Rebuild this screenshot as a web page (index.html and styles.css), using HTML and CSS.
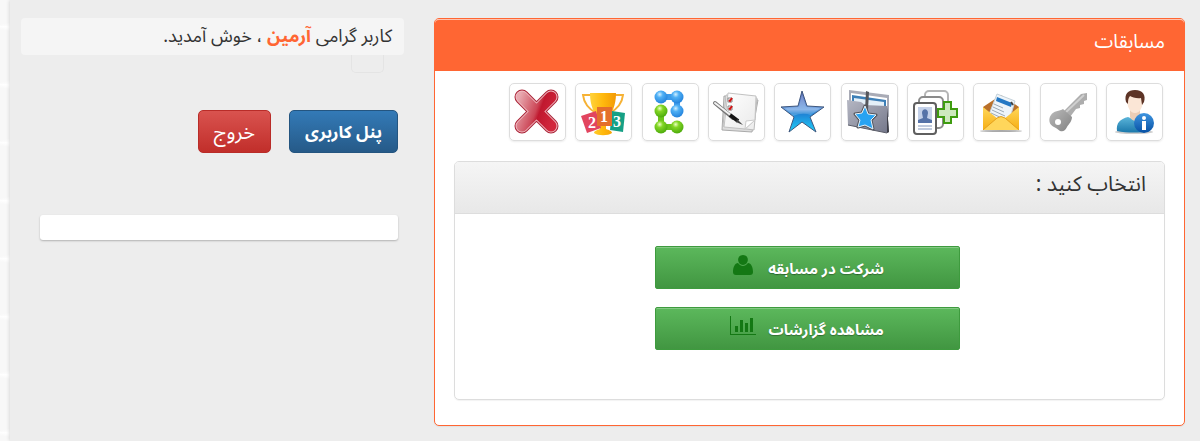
FILE: index.html
```html
<!DOCTYPE html>
<html lang="fa" dir="rtl">
<head>
    <meta charset="UTF-8">
    <meta name="viewport" content="width=device-width, initial-scale=1.0">
    <title>مسابقات</title>
    <link rel="stylesheet" href="styles.css">
</head>
<body>
    <div class="page">
        <main class="panel">
            <h1 class="panel-title">مسابقات</h1>
            <div class="panel-body">
                <nav class="icon-bar">
                    <!-- profile -->
                    <a href="#" class="icon-link" aria-label="مشخصات کاربر">
                        <svg viewBox="0 0 57 58">
                            <defs>
                                <linearGradient id="shirt" x1="0" y1="0" x2="0" y2="1"><stop offset="0" stop-color="#5bb5da"/><stop offset="1" stop-color="#1b78ab"/></linearGradient>
                                <linearGradient id="info" x1="0" y1="0" x2="0" y2="1"><stop offset="0" stop-color="#3f95e0"/><stop offset="1" stop-color="#0650a4"/></linearGradient>
                            </defs>
                            <ellipse cx="28" cy="49" rx="19" ry="2" fill="#ccc"/>
                            <path d="M11 48c-1-8 3-12 11-14l7 3 7-3c7 2 9 7 8 14-10 2-23 2-33 0z" fill="url(#shirt)"/>
                            <path d="M24 27h10v7c-2 5-8 5-10 0z" fill="#eccdb6"/>
                            <path d="M21 16c0-7 16-7 16 0 0 8-3 14-8 14s-8-6-8-14z" fill="#fbe6d6"/>
                            <path d="M20 19c-2-8 2-12 9-12 8 0 11 5 9 12l-2 3-1-7c-4 1-9-1-11-2-2 2-2 5-2 8z" fill="#5d3426"/>
                            <circle cx="38" cy="40" r="10" fill="url(#info)"/>
                            <circle cx="38" cy="35" r="2" fill="#fff"/>
                            <path d="M36 38h4v9h-4z" fill="#fff"/>
                        </svg>
                    </a>
                    <!-- password -->
                    <a href="#" class="icon-link" aria-label="تغییر رمز عبور">
                        <svg viewBox="0 0 57 58">
                            <defs>
                                <linearGradient id="key" x1="0" y1="0" x2="1" y2="1"><stop offset="0" stop-color="#bbb"/><stop offset="1" stop-color="#828282"/></linearGradient>
                            </defs>
                            <path d="M24 28 41 11l6-1v7l-3 1v3l-4 1v3l-4 1-6 8z" fill="#adadad"/>
                            <path d="M24 31 44 12" stroke="#cfcfcf" stroke-width="2"/>
                            <path d="M11 32c2-4 9-4 12-6l9 8c0 4-3 7-5 10-2 4-4 5-7 4-2-1-3-3-6-4-5-2-6-8-3-12z" fill="url(#key)"/>
                            <circle cx="18" cy="39" r="3" fill="#fff"/>
                        </svg>
                    </a>
                    <!-- messages -->
                    <a href="#" class="icon-link" aria-label="پیام ها">
                        <svg viewBox="0 0 57 58">
                            <defs>
                                <linearGradient id="mail" x1="0" y1="0" x2="0" y2="1"><stop offset="0" stop-color="#ffd75a"/><stop offset="1" stop-color="#f6ae12"/></linearGradient>
                            </defs>
                            <ellipse cx="28" cy="48" rx="21" ry="1" fill="#aaa"/>
                            <path d="M10 24 28 12l18 12v12H10z" fill="#b9702a"/>
                            <path d="m24 11 18 7-7 24-20-8z" fill="#eef4f9" stroke="#c4d1da" stroke-width="1"/>
                            <path d="m24 14 15 6-1 4-15-6z" fill="#2478c4"/>
                            <path d="m21 21 9 4m-10-1 11 5m-12-2 13 6m-14-3 13 6" stroke="#9caab4" stroke-width="1"/>
                            <path d="m38 19 2 3" stroke="#444" stroke-width="2"/>
                            <path d="m10 24 15 12h6l15-12v23H10z" fill="url(#mail)"/>
                            <path d="m10 47 14-12q4-3 8 0l14 12" fill="#ffd65b" stroke="#e5a01c" stroke-width="1"/>
                        </svg>
                    </a>
                    <!-- invite -->
                    <a href="#" class="icon-link" aria-label="افزودن کاربر">
                        <svg viewBox="0 0 57 58">
                            <rect x="18" y="8" width="23" height="30" rx="4" fill="#fff" stroke="#b5b5b5" stroke-width="2"/>
                            <rect x="12" y="14" width="24" height="31" rx="4" fill="#fff" stroke="#8b8b8b" stroke-width="2"/>
                            <path d="M37 19h7v7h6v8h-6v6h-7v-6h-6v-8h6z" fill="#cde9be" stroke="#3f9c10" stroke-width="2"/>
                            <rect x="7" y="20" width="22" height="31" rx="3" fill="#fff" stroke="#5f5f5f" stroke-width="2"/>
                            <rect x="11" y="24" width="14" height="16" fill="#c4d1e9"/>
                            <path d="M11 40v-3l5-2-1-5c0-5 6-5 6 0l-1 5 5 2v3z" fill="#5673a8"/>
                            <path d="M11 43h14M11 46h14" stroke="#8297bd" stroke-width="1"/>
                        </svg>
                    </a>
                    <!-- favourites folder -->
                    <a href="#" class="icon-link" aria-label="پوشه برگزیده ها">
                        <svg viewBox="0 0 57 58">
                            <defs>
                                <linearGradient id="folder" x1="0" y1="0" x2="1" y2="1"><stop offset="0" stop-color="#b5b7c3"/><stop offset="1" stop-color="#74778a"/></linearGradient>
                            </defs>
                            <path d="m8 7 40 5v22L8 28z" fill="#a9abb6"/>
                            <path d="m10 10 36 5v12l-36-5z" fill="#fff"/>
                            <path d="m11 12 34 5v8l-34-5z" fill="#3d7fb7"/>
                            <path d="m13 15 30 4v8l-30-5z" fill="#e4eff8"/>
                            <path d="m6 17 14 2 4 3 22 1 2 26-2 1-39-8z" fill="url(#folder)"/>
                            <path d="m46 23 2 26-2 1z" fill="#3e3f47"/>
                            <path d="m7 42 39 8" stroke="#5b5d69" stroke-width="1"/>
                            <path d="m25 8 3 1-1 18h-3z" fill="#55565c"/>
                            <path d="m24 23 3 8 8 1-5 5 2 9-8-4-7 2 2-7-5-6 7-1z" fill="#28a3f2" stroke="#55565c" stroke-width="3" stroke-linejoin="round"/>
                            <path d="m24 23 3 8 8 1-5 5 2 9-8-4-7 2 2-7-5-6 7-1z" fill="#28a3f2" stroke="#e9f4fc" stroke-width="1"/>
                        </svg>
                    </a>
                    <!-- star -->
                    <a href="#" class="icon-link" aria-label="امتیازها">
                        <svg viewBox="0 0 57 58">
                            <defs>
                                <linearGradient id="star" x1="0" y1="0" x2="0" y2="1"><stop offset="0" stop-color="#4e61b4"/><stop offset=".45" stop-color="#6fa5e4"/><stop offset=".55" stop-color="#1f82d4"/><stop offset="1" stop-color="#1fd0fa"/></linearGradient>
                            </defs>
                            <path d="m28 8 5 15 17 1-14 10 6 15-14-10-13 10 5-15L7 24l17-1z" fill="url(#star)" stroke="#40587e" stroke-width="1"/>
                            <path d="m28 11 4 13 14 1-9 7q-9-3-18 1l-8-8 14-1z" fill="#fff" opacity=".2"/>
                        </svg>
                    </a>
                    <!-- test sheet -->
                    <a href="#" class="icon-link" aria-label="آزمون">
                        <svg viewBox="0 0 57 58">
                            <defs>
                                <linearGradient id="sheet" x1="0" y1="0" x2="1" y2="1"><stop offset="0" stop-color="#fff"/><stop offset="1" stop-color="#eaeaea"/></linearGradient>
                            </defs>
                            <path d="m16 13 34 4-6 32-30-2z" fill="#ddd" stroke="#aaa" stroke-width="1"/>
                            <path d="m18 12 31 3-3 32-31-4z" fill="#eee" stroke="#bbb" stroke-width="1"/>
                            <path d="m20 10 28 3-1 24-10 9-21-2z" fill="url(#sheet)" stroke="#c2c2c2" stroke-width="1"/>
                            <path d="m47 37-10 9 1-8z" fill="#fff" stroke="#ccc" stroke-width="1"/>
                            <path d="M20 15h4v4h-4zM20 23h4v4h-4z" fill="#fff" stroke="#888" stroke-width="1"/>
                            <path d="m21 17 1 1 2-3M21 25l1 1 2-3" fill="none" stroke="#d31414" stroke-width="2"/>
                            <path d="m7 20 18 15" stroke="#777" stroke-width="4" stroke-linecap="round"/>
                            <path d="m7 20 18 14" stroke="#f2f2f2" stroke-width="2" stroke-linecap="round"/>
                            <path d="m22 32 8 6" stroke="#151515" stroke-width="4"/>
                            <path d="m29 36 6 6-7-3z" fill="#444"/>
                        </svg>
                    </a>
                    <!-- groups -->
                    <a href="#" class="icon-link" aria-label="گروه ها">
                        <svg viewBox="0 0 57 58">
                            <defs>
                                <radialGradient id="blue-ball" cx=".4" cy=".3" r=".7"><stop offset="0" stop-color="#d2efff"/><stop offset=".35" stop-color="#4fb0f5"/><stop offset="1" stop-color="#2382dc"/></radialGradient>
                                <radialGradient id="green-ball" cx=".4" cy=".3" r=".7"><stop offset="0" stop-color="#edffc4"/><stop offset=".35" stop-color="#83d625"/><stop offset="1" stop-color="#4dab0c"/></radialGradient>
                            </defs>
                            <path d="M19 14h16v14" fill="none" stroke="#3d9bea" stroke-width="6"/>
                            <path d="M19 28v16h16" fill="none" stroke="#6cc41c" stroke-width="6"/>
                            <g fill="url(#blue-ball)"><circle cx="19" cy="14" r="6.5"/><circle cx="35" cy="14" r="6.5"/><circle cx="35" cy="28" r="6.5"/></g>
                            <g fill="url(#green-ball)"><circle cx="19" cy="28" r="6.5"/><circle cx="19" cy="44" r="6.5"/><circle cx="35" cy="44" r="6.5"/></g>
                        </svg>
                    </a>
                    <!-- ranking -->
                    <a href="#" class="icon-link" aria-label="رتبه بندی">
                        <svg viewBox="0 0 57 58">
                            <defs>
                                <linearGradient id="cup"><stop offset="0" stop-color="#ffd33b"/><stop offset=".5" stop-color="#ffb90d"/><stop offset="1" stop-color="#f39a05"/></linearGradient>
                            </defs>
                            <path d="M17 12H8c1 9 6 14 13 18M38 12h10c-1 9-6 14-13 18" fill="none" stroke="#f6b235" stroke-width="2"/>
                            <path d="M15 10h26c0 13-4 21-10 25v11c3 1 6 2 6 4-4 3-14 3-18 0 0-2 3-3 6-4V35c-6-4-10-12-10-25z" fill="url(#cup)"/>
                            <path d="m6 33 15-5 5 17-14 5z" fill="#e2455f"/>
                            <path d="m37 28 13 2-2 19-13-2z" fill="#16a085"/>
                            <path d="M22 24h15v19H22z" fill="#e46f2b"/>
                            <g class="cup-number" fill="#fff" text-anchor="middle"><text x="29" y="39">1</text><text x="17" y="45">2</text><text x="42" y="44">3</text></g>
                        </svg>
                    </a>
                    <!-- exit -->
                    <a href="#" class="icon-link" aria-label="بستن">
                        <svg viewBox="0 0 57 58">
                            <defs>
                                <linearGradient id="cross" gradientUnits="userSpaceOnUse" x1="8" y1="20" x2="46" y2="34"><stop offset="0" stop-color="#e8a9b0"/><stop offset=".5" stop-color="#cc4656"/><stop offset=".6" stop-color="#c0182f"/><stop offset="1" stop-color="#d2273c"/></linearGradient>
                            </defs>
                            <g fill="none" stroke-linecap="round">
                                <path d="m13 14 29 29M42 14 13 43" stroke="#ab2438" stroke-width="15"/>
                                <path d="m13 14 29 29M42 14 13 43" stroke="#f0bcc2" stroke-width="13"/>
                                <path d="m13 14 29 29M42 14 13 43" stroke="url(#cross)" stroke-width="11"/>
                            </g>
                        </svg>
                    </a>
                </nav>

                <section class="choice">
                    <h2 class="choice-title">انتخاب کنید :</h2>
                    <div class="choice-body">
                        <button type="button" class="btn btn-success">
                            شرکت در مسابقه
                            <svg class="btn-icon" viewBox="0 0 26 22"><path d="M13 1c7 0 6 10 0 10S6 1 13 1zM8 9c3 4 7 4 10 0 3 0 5 4 5 9 0 2-1 3-3 3H6c-2 0-3-1-3-3 0-5 2-9 5-9z"/></svg>
                        </button>
                        <button type="button" class="btn btn-success">
                            مشاهده گزارشات
                            <svg class="btn-icon" viewBox="0 0 26 22"><path d="M0 1h1v18h25v1H0zM5 11h3v6H5zM10 5h3v12h-3zM15 8h3v9h-3zM20 3h3v14h-3z"/></svg>
                        </button>
                    </div>
                </section>
            </div>
        </main>

        <aside class="sidebar">
            <p class="welcome">کاربر گرامی <strong>آرمین</strong> ، خوش آمدید.</p>
            <div class="avatar"></div>
            <div class="user-buttons">
                <button type="button" class="btn btn-primary">پنل کاربری</button>
                <button type="button" class="btn btn-danger">خروج</button>
            </div>
            <div class="notice"></div>
        </aside>
    </div>
</body>
</html>
```
FILE: styles.css
```css
* {
    box-sizing: border-box;
}

body {
    margin: 0;
    font-family: "Noto Sans", "Noto Sans Arabic", "DejaVu Sans", sans-serif;
    font-size: 18px;
    line-height: 24px;
    color: #333;
    background: #fff radial-gradient(circle at 0 30px, #f8f8f8 26px, #fff 30px) 0 26px / 30px 58px;
}

.page {
    display: grid;
    grid-template-columns: 49fr 25fr;
    gap: 30px;
    min-height: 100vh;
    margin-left: 10px;
    padding: 18px 15px 15px 11px;
    background: #ededed;
    box-shadow: 0 0 4px #ccc;
}

/* main panel */
.panel {
    align-self: start;
    background: #fff;
    border: 1px solid #ff6633;
    border-radius: 5px;
    box-shadow: 0 1px 1px rgba(0, 0, 0, 0.05);
}

.panel-title {
    margin: 0;
    padding: 9px 19px 18px;
    font-size: 19px;
    font-weight: normal;
    line-height: 24px;
    color: #fff;
    background: #ff6633;
    border-top: 1px solid #ffc2ad;
    border-radius: 4px 4px 0 0;
}

.panel-body {
    padding: 12px 19px 25px;
}

.icon-bar {
    display: flex;
    justify-content: space-between;
    max-width: 656px;
    padding-right: 2px;
}

.icon-link {
    width: 57px;
    height: 58px;
    border: 1px solid #ddd;
    border-radius: 5px;
    box-shadow: 0 1px 2px rgba(0, 0, 0, 0.08);
}

.icon-link svg {
    display: block;
    width: 57px;
    height: 58px;
    margin: -1px;
}

.cup-number {
    font-family: "Liberation Serif", serif;
    font-size: 16px;
    font-weight: bold;
}

/* choice box */
.choice {
    margin-top: 20px;
    border: 1px solid #ddd;
    border-radius: 5px;
    box-shadow: 0 1px 1px rgba(0, 0, 0, 0.05);
}

.choice-title {
    margin: 0;
    padding: 9px 18px 18px;
    font-size: 21px;
    font-weight: normal;
    line-height: 24px;
    background: linear-gradient(#f5f5f5, #e8e8e8);
    border-bottom: 1px solid #ddd;
    border-radius: 4px 4px 0 0;
}

.choice-body {
    display: flex;
    flex-direction: column;
    align-items: center;
    gap: 18px;
    padding: 32px 5px 49px 0;
}

/* buttons */
.btn {
    height: 43px;
    padding: 0 15px;
    font-family: inherit;
    line-height: 24px;
    color: #fff;
    border: 1px solid;
    border-radius: 5px;
    cursor: pointer;
}

.btn-success {
    display: flex;
    justify-content: center;
    align-items: center;
    gap: 12px;
    width: 305px;
    max-width: 100%;
    font-size: 15px;
    font-weight: bold;
    text-shadow: 0 1px 1px rgba(0, 0, 0, 0.3);
    background: linear-gradient(#5cb85c, #419641);
    border-color: #3e9b3e;
    border-radius: 2px;
    box-shadow: inset 0 1px 0 rgba(255, 255, 255, 0.25);
}

.btn-icon {
    width: 26px;
    height: 22px;
    margin-bottom: 5px;
    fill: #147814;
}

.btn-primary {
    font-size: 17px;
    font-weight: bold;
    background: linear-gradient(#337ab7, #265a88);
    border-color: #245580;
}

.btn-danger {
    font-size: 20px;
    background: linear-gradient(#d9534f, #c12e2a);
    border-color: #b92c28;
}

/* sidebar */
.welcome {
    margin: 0;
    padding: 5px 12px 8px;
    background: #f5f5f5;
    border-radius: 4px;
}

.welcome strong {
    color: #ff6633;
}

.avatar {
    width: 33px;
    height: 18px;
    margin-right: 20px;
    border: 1px solid #e4e4e4;
    border-top: 0;
    border-radius: 0 0 5px 5px;
}

.user-buttons {
    display: flex;
    gap: 18px;
    margin: 37px 6px 62px;
}

.notice {
    height: 25px;
    margin: 0 6px 0 19px;
    background: #fff;
    border-radius: 3px;
    box-shadow: 0 1px 2px rgba(0, 0, 0, 0.25);
}
```
